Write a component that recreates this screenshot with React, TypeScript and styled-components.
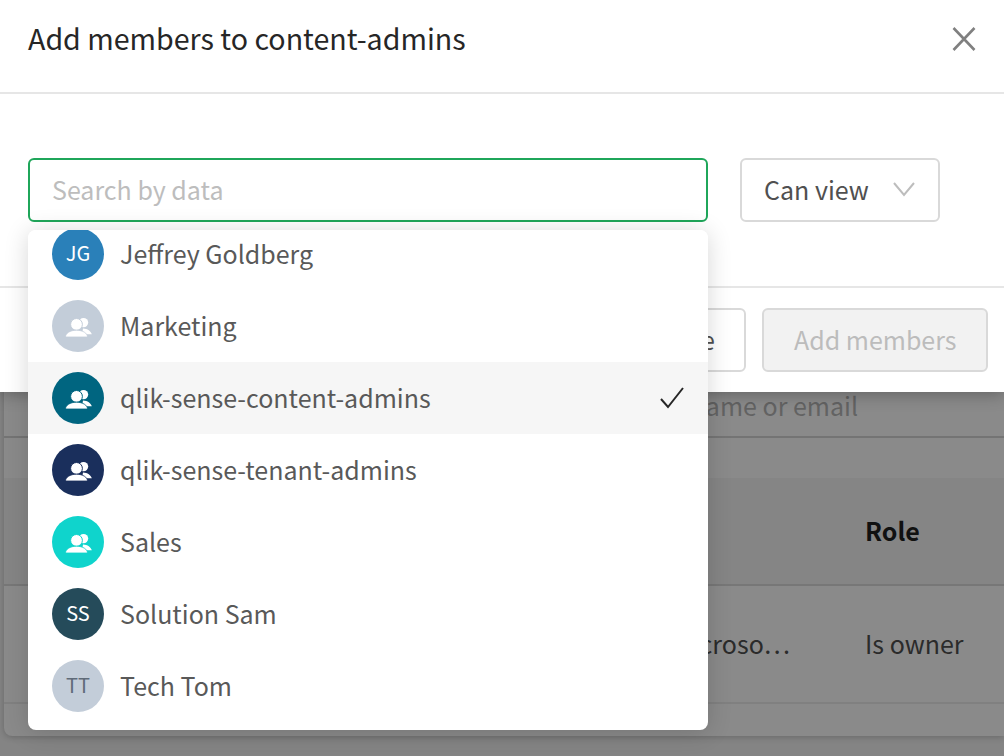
import React from "react";
import styled, { createGlobalStyle } from "styled-components";

const Global = createGlobalStyle`
  html, body { margin: 0; padding: 0; }
  body { font-family: "Noto Sans CJK SC", "Source Sans Pro", "Noto Sans", sans-serif; }
  * { box-sizing: border-box; }
`;

const Viewport = styled.div`
  position: relative;
  width: 1004px;
  height: 756px;
  overflow: hidden;
  background: #848484;
`;

const BehindCard = styled.div`
  margin: 300px 0 0 4px;
  height: 436px;
  background: #8a8a8a;
  border-radius: 8px 0 0 8px;
  box-shadow: 0 1px 6px rgba(0, 0, 0, 0.22);
  display: flex;
  flex-direction: column;
`;

const BehindSearch = styled.div`
  height: 138px;
  flex: none;
  border-bottom: 2px solid #747474;
  display: flex;
  align-items: flex-end;
  justify-content: flex-end;
  padding: 0 146px 13px 0;
  font-size: 25px;
  line-height: 36px;
  color: #636363;
`;

const BehindHead = styled.div`
  margin-top: 40px;
  height: 108px;
  flex: none;
  background: #858585;
  border-bottom: 2px solid #777;
  display: flex;
  align-items: center;
  padding: 0 0 2px 861px;
  font-size: 25px;
  line-height: 36px;
  font-weight: 700;
  color: #111;
`;

const BehindRow = styled.div`
  height: 118px;
  flex: none;
  border-bottom: 2px solid #808080;
  padding-bottom: 2px;
  display: grid;
  grid-template-columns: 786px 75px 1fr;
  align-items: center;
  font-size: 25px;
  line-height: 36px;
  color: #2b2b2b;
`;

const BehindName = styled.span`
  text-align: right;
  white-space: nowrap;
`;

const BehindRole = styled.span`
  grid-column: 3;
  white-space: nowrap;
`;

const Dialog = styled.div`
  position: absolute;
  left: 0;
  top: 0;
  width: 1004px;
  height: 392px;
  background: #fff;
  box-shadow: 0 2px 16px rgba(0, 0, 0, 0.3);
  display: flex;
  flex-direction: column;
`;

const Header = styled.header`
  height: 94px;
  flex: none;
  border-bottom: 2px solid #e6e6e6;
  display: flex;
  align-items: flex-start;
  justify-content: space-between;
  padding: 18px 28px 0;
`;

const Title = styled.h1`
  margin: 0;
  font-size: 28.6px;
  line-height: 40px;
  font-weight: 400;
  color: #262626;
`;

const CloseButton = styled.button`
  width: 24px;
  height: 24px;
  margin-top: 9px;
  padding: 0;
  border: 0;
  background: none;
  display: block;
  color: #808080;
`;

const Body = styled.div`
  height: 194px;
  flex: none;
  border-bottom: 2px solid #e6e6e6;
  padding: 64px 28px 0;
  display: flex;
  gap: 32px;
  align-items: flex-start;
`;

const SearchBox = styled.div`
  width: 680px;
  height: 64px;
  border: 2px solid #1fa65a;
  border-radius: 6px;
  padding: 0 22px 2px;
  display: flex;
  align-items: center;
  font-size: 25px;
  line-height: 36px;
  color: #bdbdbd;
`;

const RoleSelect = styled.div`
  width: 200px;
  height: 64px;
  border: 2px solid #d9d9d9;
  border-radius: 6px;
  padding: 0 23px 2px 22px;
  display: flex;
  align-items: center;
  justify-content: space-between;
  font-size: 25px;
  line-height: 36px;
  color: #505050;
`;

const Footer = styled.footer`
  flex: 1;
  padding: 20px 16px 0 0;
  display: flex;
  justify-content: flex-end;
  gap: 16px;
`;

const FooterButton = styled.button<{ $primary?: boolean }>`
  height: 64px;
  border: 2px solid #d9d9d9;
  border-radius: 6px;
  background: ${(p) => (p.$primary ? "#f2f2f2" : "#fff")};
  color: ${(p) => (p.$primary ? "#bcbcbc" : "#505050")};
  font: inherit;
  font-size: 25px;
  line-height: 36px;
  padding: 0 29.5px 2px;
`;

const Dropdown = styled.div`
  position: absolute;
  left: 28px;
  top: 230px;
  width: 680px;
  height: 500px;
  background: #fff;
  border-radius: 8px;
  overflow: hidden;
  box-shadow: 0 2px 24px rgba(0, 0, 0, 0.16);
  display: flex;
  flex-direction: column;
`;

const OptionRow = styled.div<{ $selected?: boolean; $clipped?: boolean }>`
  height: 72px;
  flex: none;
  margin-top: ${(p) => (p.$clipped ? "-12px" : "0")};
  padding: 0 24px;
  display: flex;
  align-items: center;
  gap: 16px;
  background: ${(p) => (p.$selected ? "#f6f6f6" : "#fff")};
`;

const Avatar = styled.div<{ $bg: string; $fg: string }>`
  width: 52px;
  height: 52px;
  flex: none;
  border-radius: 50%;
  background: ${(p) => p.$bg};
  color: ${(p) => p.$fg};
  display: flex;
  align-items: center;
  justify-content: center;
`;

const Initials = styled.span`
  font-size: 20px;
  line-height: 26px;
  margin-bottom: 2px;
`;

const OptionLabel = styled.span`
  flex: 1;
  font-size: 25px;
  line-height: 36px;
  margin-bottom: 2px;
  color: #595959;
  white-space: nowrap;
`;

const CheckMark = styled.svg`
  flex: none;
  width: 24px;
  height: 24px;
`;

const GroupIcon = ({ bg }: { bg: string }) => (
  <svg width="52" height="52" viewBox="0 0 52 52" aria-hidden="true">
    <circle cx="31.5" cy="22.6" r="4.7" fill="currentColor" />
    <path d="M31 28.500c4.500 0 8 3 8.800 5.800H30z" fill="currentColor" />
    <circle cx="24.500" cy="24.400" r="5.900" fill="currentColor" stroke={bg} strokeWidth="1" />
    <path
      d="M13.500 37c0-3.800 4.700-6.800 11-6.800S35.500 33.200 35.500 37z"
      fill="currentColor"
      stroke={bg}
      strokeWidth="0.8"
    />
  </svg>
);

type Opt = { name: string; bg: string; fg?: string; initials?: string; selected?: boolean };

const options: Opt[] = [
  { name: "Jeffrey Goldberg", bg: "#2a80b9", initials: "JG" },
  { name: "Marketing", bg: "#c3cdd9" },
  { name: "qlik-sense-content-admins", bg: "#006580", selected: true },
  { name: "qlik-sense-tenant-admins", bg: "#1a2f5c" },
  { name: "Sales", bg: "#0fd4cc" },
  { name: "Solution Sam", bg: "#254b5a", initials: "SS" },
  { name: "Tech Tom", bg: "#c3cdd9", fg: "#5f6b78", initials: "TT" },
];

export default function App() {
  return (
    <Viewport>
      <Global />
      <BehindCard>
        <BehindSearch>Search by name or email</BehindSearch>
        <BehindHead>Role</BehindHead>
        <BehindRow>
          <BehindName>Microso…</BehindName>
          <BehindRole>Is owner</BehindRole>
        </BehindRow>
      </BehindCard>
      <Dialog>
        <Header>
          <Title>Add members to content-admins</Title>
          <CloseButton aria-label="Close">
            <svg width="24" height="24" viewBox="0 0 24 24" fill="none" stroke="currentColor" strokeWidth="2.6">
              <path d="M1.500 1l21 22M22.500 1l-21 22" />
            </svg>
          </CloseButton>
        </Header>
        <Body>
          <SearchBox>Search by data</SearchBox>
          <RoleSelect>
            Can view
            <svg width="22" height="16" viewBox="0 0 22 16" fill="none" stroke="#bdbdbd" strokeWidth="2">
              <path d="M1 2l10 12L21 2" />
            </svg>
          </RoleSelect>
        </Body>
        <Footer>
          <FooterButton>Close</FooterButton>
          <FooterButton $primary>Add members</FooterButton>
        </Footer>
      </Dialog>
      <Dropdown>
        {options.map((o, i) => (
          <OptionRow key={o.name} $selected={o.selected} $clipped={i === 0}>
            <Avatar $bg={o.bg} $fg={o.fg ?? "#fff"}>
              {o.initials ? <Initials>{o.initials}</Initials> : <GroupIcon bg={o.bg} />}
            </Avatar>
            <OptionLabel>{o.name}</OptionLabel>
            {o.selected && (
              <CheckMark viewBox="0 0 24 24" fill="none" stroke="#262626" strokeWidth="2">
                <path d="M1 13l7 8L23 2" />
              </CheckMark>
            )}
          </OptionRow>
        ))}
      </Dropdown>
    </Viewport>
  );
}
